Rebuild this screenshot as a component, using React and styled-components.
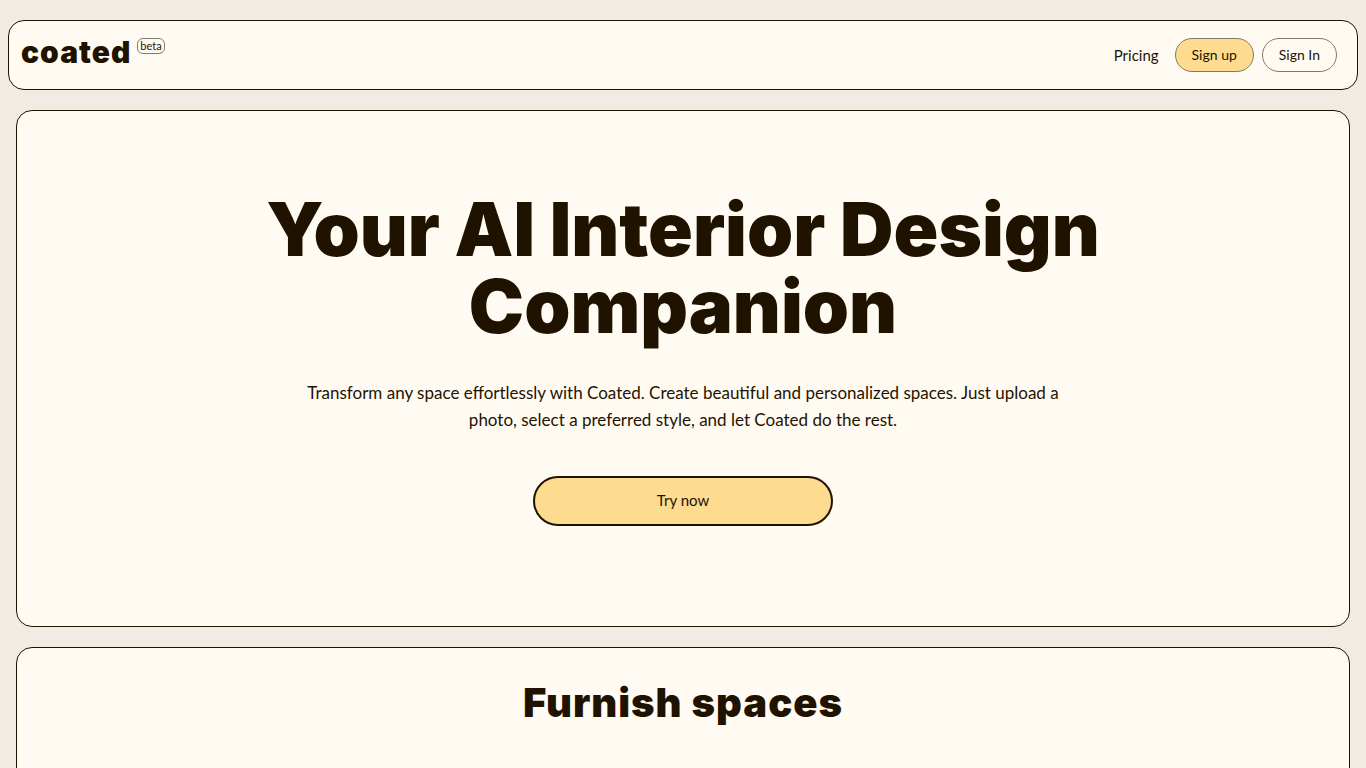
import React from "react";
import styled, { createGlobalStyle } from "styled-components";

const ink = "#1f1300";
const cream = "#fffbf3";
const amber = "#fddc8f";
const softLine = "#837a6c";
const body = 'Lato, "Open Sans", sans-serif';
const display = 'Inter, "Liberation Sans", sans-serif';

const GlobalStyle = createGlobalStyle`
  *, *::before, *::after { box-sizing: border-box; }
  body {
    margin: 0;
    background: #f0ece4;
    color: ${ink};
    font-family: ${body};
  }
  h1, h2, p { margin: 0; }
`;

const Page = styled.div`
  padding: 20px 8px;
`;

const Header = styled.header`
  display: flex;
  justify-content: space-between;
  align-items: center;
  padding: 17px 20px 17px 12px;
  background: ${cream};
  border: 1px solid ${ink};
  border-radius: 16px;
`;

const Brand = styled.a`
  display: flex;
  align-items: flex-start;
  gap: 6px;
  padding-bottom: 6px;
  color: ${ink};
  text-decoration: none;
`;

const BrandName = styled.span`
  font: 900 30px/28px ${display};
  letter-spacing: 1px;
`;

const Badge = styled.span`
  padding: 0 2px;
  border: 1px solid ${softLine};
  border-radius: 6px;
  font-size: 11px;
  line-height: 14px;
`;

const Nav = styled.nav`
  display: flex;
  align-items: center;
  gap: 8px;
`;

const NavLink = styled.a`
  margin-right: 8px;
  color: ${ink};
  font-size: 15px;
  line-height: 24px;
  text-decoration: none;
`;

const Button = styled.button`
  height: ${(p) => (p.$large ? 50 : 34)}px;
  width: ${(p) => (p.$large ? "300px" : "auto")};
  padding: 0 16px 2px;
  border: ${(p) => (p.$large ? `2px solid ${ink}` : `1px solid ${softLine}`)};
  border-radius: 25px;
  background: ${(p) => (p.$filled ? amber : cream)};
  color: ${ink};
  font-family: ${body};
  font-size: ${(p) => (p.$large ? 15 : 14)}px;
  cursor: pointer;
`;

const Main = styled.main`
  display: flex;
  flex-direction: column;
  gap: 20px;
  padding: 20px 8px;
`;

const Panel = styled.section`
  display: flex;
  flex-direction: column;
  align-items: center;
  padding: ${(p) => (p.$hero ? "80px 24px 100px" : "32px 24px 80px")};
  background: ${cream};
  border: 1px solid ${ink};
  border-radius: 16px;
  text-align: center;
`;

const Title = styled.h1`
  max-width: 900px;
  font: 900 74px/77px ${display};
`;

const Lead = styled.p`
  max-width: 768px;
  margin: 34px 0 43px;
  font-size: 17px;
  line-height: 27px;
`;

const SectionTitle = styled.h2`
  font: 900 40px/46px ${display};
  letter-spacing: 1px;
`;

export default function App() {
  return (
    <>
      <GlobalStyle />
      <Page>
        <Header>
          <Brand href="#">
            <BrandName>coated</BrandName>
            <Badge>beta</Badge>
          </Brand>
          <Nav>
            <NavLink href="#pricing">Pricing</NavLink>
            <Button $filled>Sign up</Button>
            <Button>Sign In</Button>
          </Nav>
        </Header>
        <Main>
          <Panel $hero>
            <Title>Your AI Interior Design Companion</Title>
            <Lead>
              Transform any space effortlessly with Coated. Create beautiful and
              personalized spaces. Just upload a photo, select a preferred
              style, and let Coated do the rest.
            </Lead>
            <Button $filled $large>Try now</Button>
          </Panel>
          <Panel>
            <SectionTitle>Furnish spaces</SectionTitle>
          </Panel>
        </Main>
      </Page>
    </>
  );
}
